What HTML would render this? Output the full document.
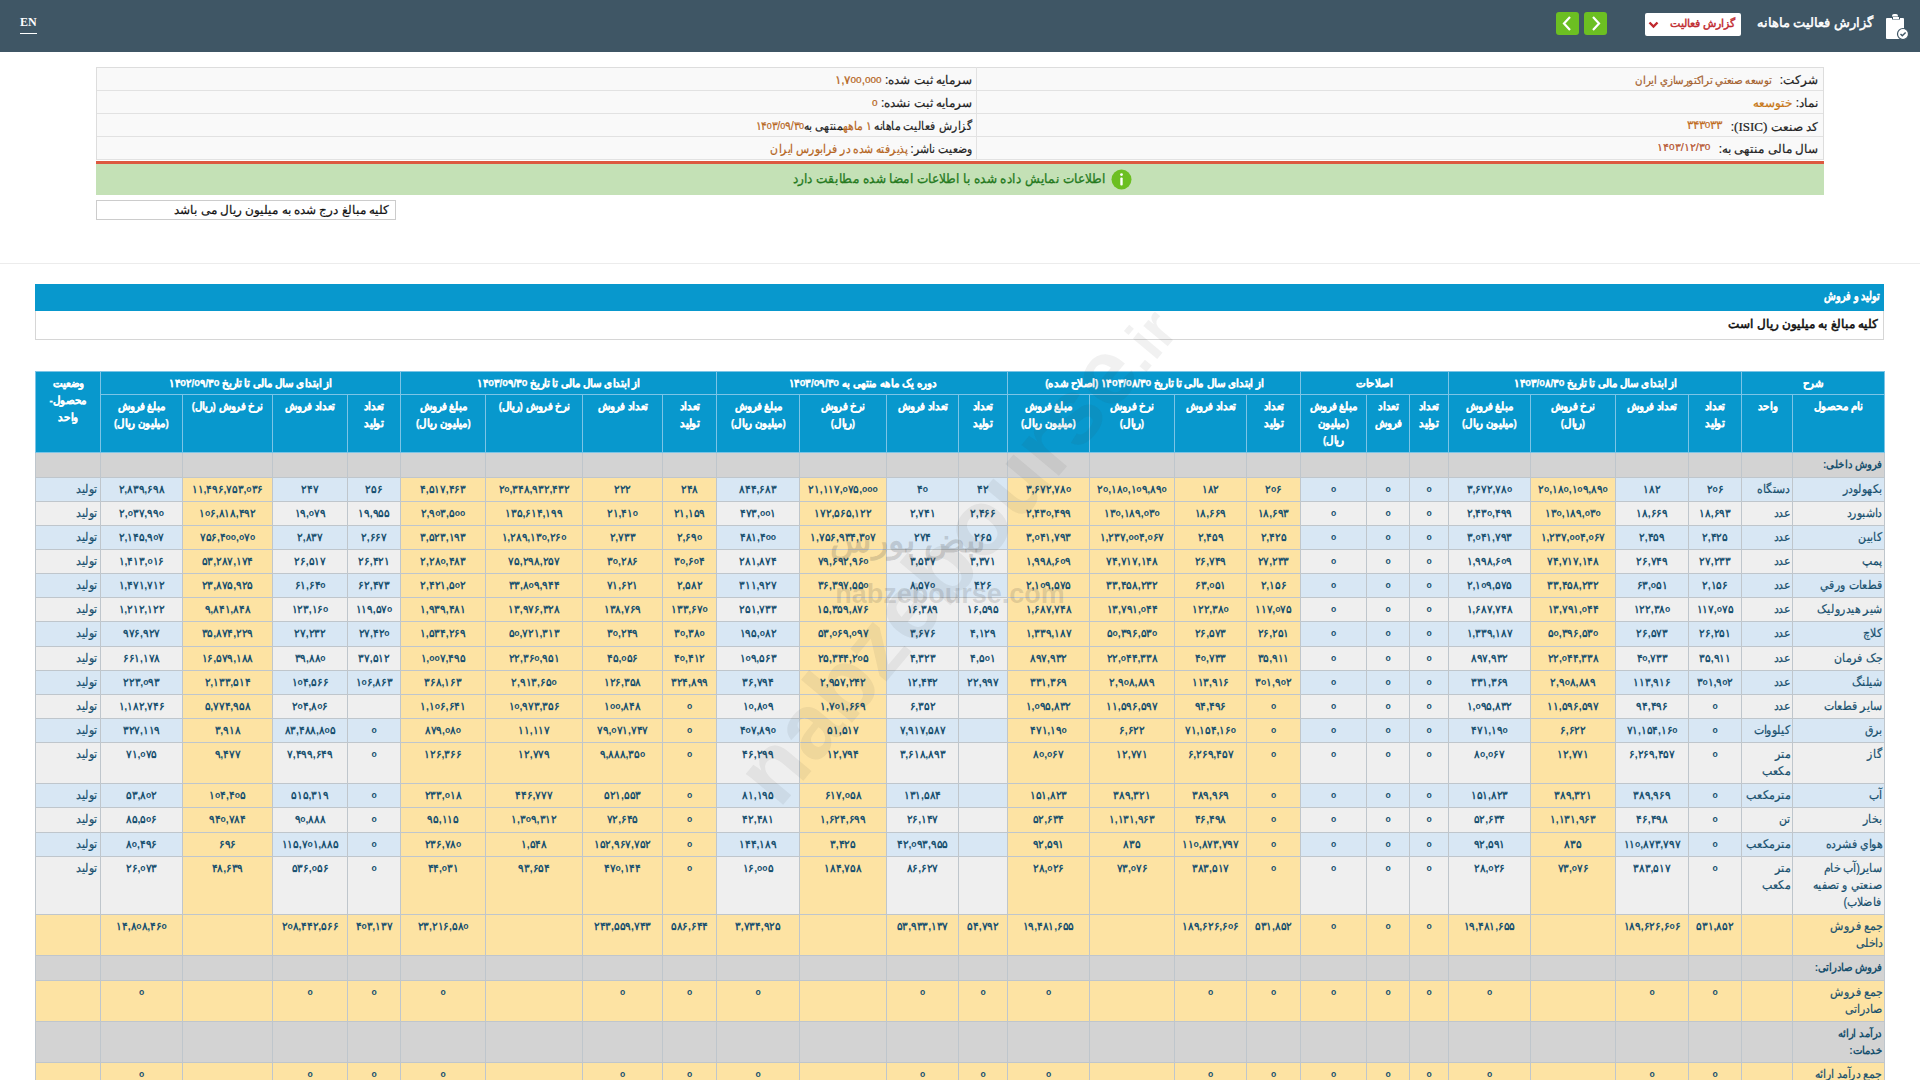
<!DOCTYPE html>
<html lang="fa" dir="rtl"><head><meta charset="utf-8"><title>گزارش فعالیت ماهانه</title>
<style>
*{box-sizing:border-box}
html,body{margin:0;padding:0;background:#fff;width:1920px;height:1080px;overflow:hidden;font-family:"Liberation Sans",sans-serif;}
.abs{position:absolute}
#top{left:0;top:0;width:1920px;height:52px;background:#3f5665}
#en{left:20px;top:15px;font-family:"Liberation Serif",serif;font-weight:bold;color:#fff;font-size:12px;border-bottom:1px solid #fff;line-height:14px;padding-bottom:4px;direction:ltr}
#ttl{right:47px;top:15px;color:#fff;font-size:13px;white-space:nowrap;-webkit-text-stroke:0.5px}
#sel{left:1645px;top:13px;width:96px;height:23px;background:#fff;border-radius:2px}
#sel span{position:absolute;right:6px;top:4px;color:#c0282d;font-size:11px;white-space:nowrap;-webkit-text-stroke:0.4px}
.gbtn{top:12px;width:23px;height:23px;background:#6cbf22;border-radius:3px}
#info{left:96px;top:67px;width:1728px;border:1px solid #ddd;border-bottom:0;background:#f9f9f9}
.irow{height:23px;border-bottom:1px solid #e2e2e2;position:relative;font-size:12px;white-space:nowrap}
.irow .r{position:absolute;right:5px;top:5px;color:#222;-webkit-text-stroke:0.2px}
.irow .l{position:absolute;right:851px;top:5px;color:#222;-webkit-text-stroke:0.2px}
.irow b{font-weight:normal;color:#b5651d}
s.z{text-decoration:none;font-family:'Liberation Sans',sans-serif;font-size:10px;position:relative;top:-1px}
.sx{display:inline-block;font-size:11px;transform:scaleX(.93);transform-origin:right;margin-right:4px}
.sy{transform:scaleX(.9);transform-origin:right}
#vsep{left:976px;top:67px;width:1px;height:93px;background:#e2e2e2}
#red{left:96px;top:161px;width:1728px;height:3px;background:#dd5840}
#green{left:96px;top:164px;width:1728px;height:31px;background:#c4e1b6}
#gtxt{right:718px;top:7px;color:#257a1e;font-size:13px;white-space:nowrap;-webkit-text-stroke:0.3px;transform:scaleX(.93);transform-origin:right}
#note{left:96px;top:200px;width:300px;height:20px;border:1px solid #ccc;font-size:12px;color:#111;white-space:nowrap}
#note span{position:absolute;right:6px;top:2px;-webkit-text-stroke:0.2px}
#hr{left:0;top:263px;width:1920px;height:1px;background:#ececec}
#tbar{left:35px;top:284px;width:1849px;height:27px;background:#0898cd}
#tbar span{position:absolute;right:4px;top:5px;color:#fff;font-weight:bold;font-size:12px;white-space:nowrap;transform:scaleX(.8);transform-origin:right;-webkit-text-stroke:0.2px}
#sub{left:35px;top:311px;width:1849px;height:29px;border:1px solid #d6d6d6;border-top:0;background:#fff}
#sub span{position:absolute;right:5px;top:6px;color:#111;font-size:12px;white-space:nowrap;-webkit-text-stroke:0.55px}
table#t{position:absolute;left:35px;top:371px;border-collapse:collapse;table-layout:fixed;width:1849px}
#t td,#t th{border:1px solid #bfc6cc;padding:0;font-size:11px;font-weight:bold;text-align:center;vertical-align:top;color:#17506e;white-space:nowrap;overflow:hidden}
#t th{background:#0898cd;color:#fff;font-weight:bold;border-color:#7cc4e6;font-size:10.5px;line-height:17px;padding-top:3px;white-space:nowrap;overflow:visible}
#t tr.o td{background:#d8e7f4}
#t tr.e td{background:#efefef}
#t tr.o td.y,#t tr.e td.y,#t tr.tot td{background:#fde3a3}
#t tr.cat td{background:#d3d3d3}
#t td{line-height:17px;padding-top:3px}
#t th span.h{display:inline-block;transform:scaleX(.93);margin:0 -12px;-webkit-text-stroke:0.25px}
#t td i{display:block;font-style:normal;margin:0 -12px;transform:scaleX(.95);direction:ltr}
#t td i s{text-decoration:none;font-size:9px;font-family:'Liberation Sans',sans-serif;position:relative;top:-1px}
#t td.nm{text-align:right;padding-right:2px;overflow:visible;font-size:12px;font-weight:normal;-webkit-text-stroke:0.2px}
#t td span.w{display:inline-block;transform:scaleX(.91);transform-origin:right;margin-left:-20px}
#t td.un{text-align:right;padding-right:2px;font-size:12px;font-weight:normal;-webkit-text-stroke:0.2px}
#t td.st{text-align:right;padding-right:3px;font-size:12px;font-weight:normal;-webkit-text-stroke:0.2px}
#t tr.cat td.nm{font-weight:bold;font-size:11px;-webkit-text-stroke:0}
#t tr.cat td.nm span{display:inline-block;transform:scaleX(.92);transform-origin:right}
</style></head><body>

<div id="top" class="abs">
<div id="en" class="abs">EN</div>
<svg class="abs" style="left:1884px;top:14px" width="26" height="26" viewBox="0 0 26 26">
<path d="M3 4 h5 v-2 a2 2 0 0 1 2 -2 h2 a2 2 0 0 1 2 2 v2 h5 a1 1 0 0 1 1 1 v19 a1 1 0 0 1 -1 1 h-16 a1 1 0 0 1 -1 -1 v-19 a1 1 0 0 1 1 -1z" fill="#fff"/>
<path d="M8 2.5 h8 v3 h-8z" fill="#3f5665"/><rect x="9" y="3" width="6" height="2" fill="#fff"/>
<circle cx="19" cy="20" r="5.5" fill="#fff" stroke="#3f5665" stroke-width="1.2"/>
<path d="M16.5 20 l1.8 1.8 l3.3 -3.3" stroke="#3f5665" stroke-width="1.4" fill="none"/>
</svg>
<div id="ttl" class="abs">گزارش فعالیت ماهانه</div>
<div id="sel" class="abs"><span>گزارش فعالیت</span>
<svg class="abs" style="left:3px;top:8px" width="11" height="8" viewBox="0 0 11 8"><path d="M1.5 1.5 L5.5 5.5 L9.5 1.5" stroke="#c0282d" stroke-width="2.4" fill="none"/></svg></div>
<div class="abs gbtn" style="left:1556px"><svg width="23" height="23" viewBox="0 0 23 23"><path d="M14 5 L8 11.5 L14 18" stroke="#fff" stroke-width="2.2" fill="none"/></svg></div>
<div class="abs gbtn" style="left:1584px"><svg width="23" height="23" viewBox="0 0 23 23"><path d="M9 5 L15 11.5 L9 18" stroke="#fff" stroke-width="2.2" fill="none"/></svg></div>
</div>

<div id="info" class="abs">
<div class="irow"><span class="r">شرکت: <b class="sx" style="color:#a4602c">توسعه صنعتي تراكتورسازي ايران</b></span><span class="l">سرمایه ثبت شده: <b>۱,۷<s class="z">o</s><s class="z">o</s>,<s class="z">o</s><s class="z">o</s><s class="z">o</s></b></span></div>
<div class="irow"><span class="r">نماد: <b style="color:#c77614">ختوسعه</b></span><span class="l">سرمایه ثبت نشده: <b><s class="z">o</s></b></span></div>
<div class="irow"><span class="r">کد صنعت <span style="font-family:'Liberation Serif',serif;font-size:13px">(ISIC)</span>: <b style="position:relative;top:-2px;margin-right:5px;color:#c06a1e">۳۴۳<s class="z">o</s>۳۳</b></span><span class="l sy">گزارش فعالیت ماهانه <b>۱ ماهه</b>منتهی به<b>۱۴<s class="z">o</s>۳/<s class="z">o</s>۹/۳<s class="z">o</s></b></span></div>
<div class="irow"><span class="r">سال مالی منتهی به: <b style="position:relative;top:-2px;margin-right:5px;color:#b4502a;font-size:11px">۱۴<s class="z">o</s>۳/۱۲/۳<s class="z">o</s></b></span><span class="l sy">وضعیت ناشر: <b>پذیرفته شده در فرابورس ایران</b></span></div>
</div>
<div id="vsep" class="abs"></div>
<div id="red" class="abs"></div>
<div id="green" class="abs">
<svg class="abs" style="left:1015px;top:5px" width="21" height="21" viewBox="0 0 21 21"><circle cx="10.5" cy="10.5" r="10" fill="#6cbf22"/><rect x="9.3" y="8.5" width="2.4" height="8" rx="1" fill="#fff"/><circle cx="10.5" cy="5.6" r="1.4" fill="#fff"/></svg>
<span id="gtxt" class="abs">اطلاعات نمایش داده شده با اطلاعات امضا شده مطابقت دارد</span>
</div>
<div id="note" class="abs"><span>کلیه مبالغ درج شده به میلیون ریال می باشد</span></div>
<div id="hr" class="abs"></div>
<div id="tbar" class="abs"><span>تولید و فروش</span></div>
<div id="sub" class="abs"><span>کلیه مبالغ به میلیون ریال است</span></div>

<table id="t"><colgroup>
<col style="width:92px">
<col style="width:51px">
<col style="width:53px">
<col style="width:73px">
<col style="width:85px">
<col style="width:82px">
<col style="width:39px">
<col style="width:43px">
<col style="width:66px">
<col style="width:54px">
<col style="width:72px">
<col style="width:85px">
<col style="width:82px">
<col style="width:49px">
<col style="width:72px">
<col style="width:87px">
<col style="width:83px">
<col style="width:54px">
<col style="width:80px">
<col style="width:97px">
<col style="width:85px">
<col style="width:53px">
<col style="width:75px">
<col style="width:90px">
<col style="width:82px">
<col style="width:65px">
</colgroup>
<tr style="height:23px">
<th colspan="2"><span class="h">شرح</span></th>
<th colspan="4"><span class="h">از ابتدای سال مالی تا تاریخ ۱۴<s class="z">o</s>۳/<s class="z">o</s>۸/۳<s class="z">o</s></span></th>
<th colspan="3"><span class="h">اصلاحات</span></th>
<th colspan="4"><span class="h">از ابتدای سال مالی تا تاریخ ۱۴<s class="z">o</s>۳/<s class="z">o</s>۸/۳<s class="z">o</s> (اصلاح شده)</span></th>
<th colspan="4"><span class="h">دوره یک ماهه منتهی به ۱۴<s class="z">o</s>۳/<s class="z">o</s>۹/۳<s class="z">o</s></span></th>
<th colspan="4"><span class="h">از ابتدای سال مالی تا تاریخ ۱۴<s class="z">o</s>۳/<s class="z">o</s>۹/۳<s class="z">o</s></span></th>
<th colspan="4"><span class="h">از ابتدای سال مالی تا تاریخ ۱۴<s class="z">o</s>۲/<s class="z">o</s>۹/۳<s class="z">o</s></span></th>
<th rowspan="2"><span class="h">وضعیت<br>محصول-<br>واحد</span></th>
</tr>
<tr style="height:58px">
<th><span class="h">نام محصول</span></th><th><span class="h">واحد</span></th>
<th><span class="h">تعداد<br>تولید</span></th><th><span class="h">تعداد فروش</span></th><th><span class="h">نرخ فروش<br>(ریال)</span></th><th><span class="h">مبلغ فروش<br>(میلیون ریال)</span></th>
<th><span class="h">تعداد<br>تولید</span></th><th><span class="h">تعداد<br>فروش</span></th><th><span class="h">مبلغ فروش<br>(میلیون<br>ریال)</span></th>
<th><span class="h">تعداد<br>تولید</span></th><th><span class="h">تعداد فروش</span></th><th><span class="h">نرخ فروش<br>(ریال)</span></th><th><span class="h">مبلغ فروش<br>(میلیون ریال)</span></th>
<th><span class="h">تعداد<br>تولید</span></th><th><span class="h">تعداد فروش</span></th><th><span class="h">نرخ فروش<br>(ریال)</span></th><th><span class="h">مبلغ فروش<br>(میلیون ریال)</span></th>
<th><span class="h">تعداد<br>تولید</span></th><th><span class="h">تعداد فروش</span></th><th><span class="h">نرخ فروش (ریال)</span></th><th><span class="h">مبلغ فروش<br>(میلیون ریال)</span></th>
<th><span class="h">تعداد<br>تولید</span></th><th><span class="h">تعداد فروش</span></th><th><span class="h">نرخ فروش (ریال)</span></th><th><span class="h">مبلغ فروش<br>(میلیون ریال)</span></th>
</tr>
<tr class="cat" style="height:25px"><td class="nm"><span>فروش داخلی:</span></td><td></td><td></td><td></td><td></td><td></td><td></td><td></td><td></td><td></td><td></td><td></td><td></td><td></td><td></td><td></td><td></td><td></td><td></td><td></td><td></td><td></td><td></td><td></td><td></td><td></td></tr>
<tr class="o" style="height:24px"><td class="nm"><span class="w">بکهولودر</span></td><td class="un"><span class="w">دستگاه</span></td><td><i>۲<s>o</s>۶</i></td><td><i>۱۸۲</i></td><td class="y"><i>۲<s>o</s>,۱۸<s>o</s>,۱<s>o</s>۹,۸۹<s>o</s></i></td><td><i>۳,۶۷۲,۷۸<s>o</s></i></td><td><i><s>o</s></i></td><td><i><s>o</s></i></td><td><i><s>o</s></i></td><td class="y"><i>۲<s>o</s>۶</i></td><td class="y"><i>۱۸۲</i></td><td class="y"><i>۲<s>o</s>,۱۸<s>o</s>,۱<s>o</s>۹,۸۹<s>o</s></i></td><td class="y"><i>۳,۶۷۲,۷۸<s>o</s></i></td><td><i>۴۲</i></td><td><i>۴<s>o</s></i></td><td class="y"><i>۲۱,۱۱۷,<s>o</s>۷۵,<s>o</s><s>o</s><s>o</s></i></td><td><i>۸۴۴,۶۸۳</i></td><td class="y"><i>۲۴۸</i></td><td class="y"><i>۲۲۲</i></td><td class="y"><i>۲<s>o</s>,۳۴۸,۹۳۲,۴۳۲</i></td><td class="y"><i>۴,۵۱۷,۴۶۳</i></td><td><i>۲۵۶</i></td><td><i>۲۴۷</i></td><td class="y"><i>۱۱,۴۹۶,۷۵۳,<s>o</s>۳۶</i></td><td><i>۲,۸۳۹,۶۹۸</i></td><td class="st"><span class="w">تولید</span></td></tr>
<tr class="e" style="height:24px"><td class="nm"><span class="w">داشبورد</span></td><td class="un"><span class="w">عدد</span></td><td><i>۱۸,۶۹۳</i></td><td><i>۱۸,۶۶۹</i></td><td class="y"><i>۱۳<s>o</s>,۱۸۹,<s>o</s>۳<s>o</s></i></td><td><i>۲,۴۳<s>o</s>,۴۹۹</i></td><td><i><s>o</s></i></td><td><i><s>o</s></i></td><td><i><s>o</s></i></td><td class="y"><i>۱۸,۶۹۳</i></td><td class="y"><i>۱۸,۶۶۹</i></td><td class="y"><i>۱۳<s>o</s>,۱۸۹,<s>o</s>۳<s>o</s></i></td><td class="y"><i>۲,۴۳<s>o</s>,۴۹۹</i></td><td><i>۲,۴۶۶</i></td><td><i>۲,۷۴۱</i></td><td class="y"><i>۱۷۲,۵۶۵,۱۲۲</i></td><td><i>۴۷۳,<s>o</s><s>o</s>۱</i></td><td class="y"><i>۲۱,۱۵۹</i></td><td class="y"><i>۲۱,۴۱<s>o</s></i></td><td class="y"><i>۱۳۵,۶۱۴,۱۹۹</i></td><td class="y"><i>۲,۹<s>o</s>۳,۵<s>o</s><s>o</s></i></td><td><i>۱۹,۹۵۵</i></td><td><i>۱۹,<s>o</s>۷۹</i></td><td class="y"><i>۱<s>o</s>۶,۸۱۸,۴۹۲</i></td><td><i>۲,<s>o</s>۳۷,۹۹<s>o</s></i></td><td class="st"><span class="w">تولید</span></td></tr>
<tr class="o" style="height:24px"><td class="nm"><span class="w">کابین</span></td><td class="un"><span class="w">عدد</span></td><td><i>۲,۴۲۵</i></td><td><i>۲,۴۵۹</i></td><td class="y"><i>۱,۲۳۷,<s>o</s><s>o</s>۴,<s>o</s>۶۷</i></td><td><i>۳,<s>o</s>۴۱,۷۹۳</i></td><td><i><s>o</s></i></td><td><i><s>o</s></i></td><td><i><s>o</s></i></td><td class="y"><i>۲,۴۲۵</i></td><td class="y"><i>۲,۴۵۹</i></td><td class="y"><i>۱,۲۳۷,<s>o</s><s>o</s>۴,<s>o</s>۶۷</i></td><td class="y"><i>۳,<s>o</s>۴۱,۷۹۳</i></td><td><i>۲۶۵</i></td><td><i>۲۷۴</i></td><td class="y"><i>۱,۷۵۶,۹۳۴,۳<s>o</s>۷</i></td><td><i>۴۸۱,۴<s>o</s><s>o</s></i></td><td class="y"><i>۲,۶۹<s>o</s></i></td><td class="y"><i>۲,۷۳۳</i></td><td class="y"><i>۱,۲۸۹,۱۳<s>o</s>,۲۶<s>o</s></i></td><td class="y"><i>۳,۵۲۳,۱۹۳</i></td><td><i>۲,۶۶۷</i></td><td><i>۲,۸۳۷</i></td><td class="y"><i>۷۵۶,۴<s>o</s><s>o</s>,<s>o</s>۷<s>o</s></i></td><td><i>۲,۱۴۵,۹<s>o</s>۷</i></td><td class="st"><span class="w">تولید</span></td></tr>
<tr class="e" style="height:24px"><td class="nm"><span class="w">پمپ</span></td><td class="un"><span class="w">عدد</span></td><td><i>۲۷,۲۳۳</i></td><td><i>۲۶,۷۴۹</i></td><td class="y"><i>۷۴,۷۱۷,۱۴۸</i></td><td><i>۱,۹۹۸,۶<s>o</s>۹</i></td><td><i><s>o</s></i></td><td><i><s>o</s></i></td><td><i><s>o</s></i></td><td class="y"><i>۲۷,۲۳۳</i></td><td class="y"><i>۲۶,۷۴۹</i></td><td class="y"><i>۷۴,۷۱۷,۱۴۸</i></td><td class="y"><i>۱,۹۹۸,۶<s>o</s>۹</i></td><td><i>۳,۳۷۱</i></td><td><i>۳,۵۳۷</i></td><td class="y"><i>۷۹,۶۹۲,۹۶<s>o</s></i></td><td><i>۲۸۱,۸۷۴</i></td><td class="y"><i>۳<s>o</s>,۶<s>o</s>۴</i></td><td class="y"><i>۳<s>o</s>,۲۸۶</i></td><td class="y"><i>۷۵,۲۹۸,۲۵۷</i></td><td class="y"><i>۲,۲۸<s>o</s>,۴۸۳</i></td><td><i>۲۶,۴۲۱</i></td><td><i>۲۶,۵۱۷</i></td><td class="y"><i>۵۳,۲۸۷,۱۷۴</i></td><td><i>۱,۴۱۳,<s>o</s>۱۶</i></td><td class="st"><span class="w">تولید</span></td></tr>
<tr class="o" style="height:24px"><td class="nm"><span class="w">قطعات ورقي</span></td><td class="un"><span class="w">عدد</span></td><td><i>۲,۱۵۶</i></td><td><i>۶۳,<s>o</s>۵۱</i></td><td class="y"><i>۳۳,۴۵۸,۲۳۲</i></td><td><i>۲,۱<s>o</s>۹,۵۷۵</i></td><td><i><s>o</s></i></td><td><i><s>o</s></i></td><td><i><s>o</s></i></td><td class="y"><i>۲,۱۵۶</i></td><td class="y"><i>۶۳,<s>o</s>۵۱</i></td><td class="y"><i>۳۳,۴۵۸,۲۳۲</i></td><td class="y"><i>۲,۱<s>o</s>۹,۵۷۵</i></td><td><i>۴۲۶</i></td><td><i>۸,۵۷<s>o</s></i></td><td class="y"><i>۳۶,۳۹۷,۵۵<s>o</s></i></td><td><i>۳۱۱,۹۲۷</i></td><td class="y"><i>۲,۵۸۲</i></td><td class="y"><i>۷۱,۶۲۱</i></td><td class="y"><i>۳۳,۸<s>o</s>۹,۹۴۴</i></td><td class="y"><i>۲,۴۲۱,۵<s>o</s>۲</i></td><td><i>۶۲,۴۷۳</i></td><td><i>۶۱,۶۴<s>o</s></i></td><td class="y"><i>۲۳,۸۷۵,۹۲۵</i></td><td><i>۱,۴۷۱,۷۱۲</i></td><td class="st"><span class="w">تولید</span></td></tr>
<tr class="e" style="height:24px"><td class="nm"><span class="w">شیر هیدرولیک</span></td><td class="un"><span class="w">عدد</span></td><td><i>۱۱۷,<s>o</s>۷۵</i></td><td><i>۱۲۲,۳۸<s>o</s></i></td><td class="y"><i>۱۳,۷۹۱,<s>o</s>۴۴</i></td><td><i>۱,۶۸۷,۷۴۸</i></td><td><i><s>o</s></i></td><td><i><s>o</s></i></td><td><i><s>o</s></i></td><td class="y"><i>۱۱۷,<s>o</s>۷۵</i></td><td class="y"><i>۱۲۲,۳۸<s>o</s></i></td><td class="y"><i>۱۳,۷۹۱,<s>o</s>۴۴</i></td><td class="y"><i>۱,۶۸۷,۷۴۸</i></td><td><i>۱۶,۵۹۵</i></td><td><i>۱۶,۳۸۹</i></td><td class="y"><i>۱۵,۳۵۹,۸۷۶</i></td><td><i>۲۵۱,۷۳۳</i></td><td class="y"><i>۱۳۳,۶۷<s>o</s></i></td><td class="y"><i>۱۳۸,۷۶۹</i></td><td class="y"><i>۱۳,۹۷۶,۳۲۸</i></td><td class="y"><i>۱,۹۳۹,۴۸۱</i></td><td><i>۱۱۹,۵۷<s>o</s></i></td><td><i>۱۲۳,۱۶<s>o</s></i></td><td class="y"><i>۹,۸۴۱,۸۴۸</i></td><td><i>۱,۲۱۲,۱۲۲</i></td><td class="st"><span class="w">تولید</span></td></tr>
<tr class="o" style="height:25px"><td class="nm"><span class="w">کلاچ</span></td><td class="un"><span class="w">عدد</span></td><td><i>۲۶,۲۵۱</i></td><td><i>۲۶,۵۷۳</i></td><td class="y"><i>۵<s>o</s>,۳۹۶,۵۳<s>o</s></i></td><td><i>۱,۳۳۹,۱۸۷</i></td><td><i><s>o</s></i></td><td><i><s>o</s></i></td><td><i><s>o</s></i></td><td class="y"><i>۲۶,۲۵۱</i></td><td class="y"><i>۲۶,۵۷۳</i></td><td class="y"><i>۵<s>o</s>,۳۹۶,۵۳<s>o</s></i></td><td class="y"><i>۱,۳۳۹,۱۸۷</i></td><td><i>۴,۱۲۹</i></td><td><i>۳,۶۷۶</i></td><td class="y"><i>۵۳,<s>o</s>۶۹,<s>o</s>۹۷</i></td><td><i>۱۹۵,<s>o</s>۸۲</i></td><td class="y"><i>۳<s>o</s>,۳۸<s>o</s></i></td><td class="y"><i>۳<s>o</s>,۲۴۹</i></td><td class="y"><i>۵<s>o</s>,۷۲۱,۳۱۳</i></td><td class="y"><i>۱,۵۳۴,۲۶۹</i></td><td><i>۲۷,۴۲<s>o</s></i></td><td><i>۲۷,۲۳۲</i></td><td class="y"><i>۳۵,۸۷۴,۲۲۹</i></td><td><i>۹۷۶,۹۲۷</i></td><td class="st"><span class="w">تولید</span></td></tr>
<tr class="e" style="height:24px"><td class="nm"><span class="w">جک فرمان</span></td><td class="un"><span class="w">عدد</span></td><td><i>۳۵,۹۱۱</i></td><td><i>۴<s>o</s>,۷۳۳</i></td><td class="y"><i>۲۲,<s>o</s>۴۴,۳۳۸</i></td><td><i>۸۹۷,۹۳۲</i></td><td><i><s>o</s></i></td><td><i><s>o</s></i></td><td><i><s>o</s></i></td><td class="y"><i>۳۵,۹۱۱</i></td><td class="y"><i>۴<s>o</s>,۷۳۳</i></td><td class="y"><i>۲۲,<s>o</s>۴۴,۳۳۸</i></td><td class="y"><i>۸۹۷,۹۳۲</i></td><td><i>۴,۵<s>o</s>۱</i></td><td><i>۴,۳۲۳</i></td><td class="y"><i>۲۵,۳۴۴,۲<s>o</s>۵</i></td><td><i>۱<s>o</s>۹,۵۶۳</i></td><td class="y"><i>۴<s>o</s>,۴۱۲</i></td><td class="y"><i>۴۵,<s>o</s>۵۶</i></td><td class="y"><i>۲۲,۳۶<s>o</s>,۹۵۱</i></td><td class="y"><i>۱,<s>o</s><s>o</s>۷,۴۹۵</i></td><td><i>۳۷,۵۱۲</i></td><td><i>۳۹,۸۸<s>o</s></i></td><td class="y"><i>۱۶,۵۷۹,۱۸۸</i></td><td><i>۶۶۱,۱۷۸</i></td><td class="st"><span class="w">تولید</span></td></tr>
<tr class="o" style="height:24px"><td class="nm"><span class="w">شیلنگ</span></td><td class="un"><span class="w">عدد</span></td><td><i>۳<s>o</s>۱,۹<s>o</s>۲</i></td><td><i>۱۱۳,۹۱۶</i></td><td class="y"><i>۲,۹<s>o</s>۸,۸۸۹</i></td><td><i>۳۳۱,۳۶۹</i></td><td><i><s>o</s></i></td><td><i><s>o</s></i></td><td><i><s>o</s></i></td><td class="y"><i>۳<s>o</s>۱,۹<s>o</s>۲</i></td><td class="y"><i>۱۱۳,۹۱۶</i></td><td class="y"><i>۲,۹<s>o</s>۸,۸۸۹</i></td><td class="y"><i>۳۳۱,۳۶۹</i></td><td><i>۲۲,۹۹۷</i></td><td><i>۱۲,۴۴۲</i></td><td class="y"><i>۲,۹۵۷,۲۴۲</i></td><td><i>۳۶,۷۹۴</i></td><td class="y"><i>۳۲۴,۸۹۹</i></td><td class="y"><i>۱۲۶,۳۵۸</i></td><td class="y"><i>۲,۹۱۳,۶۵<s>o</s></i></td><td class="y"><i>۳۶۸,۱۶۳</i></td><td><i>۱<s>o</s>۶,۸۶۳</i></td><td><i>۱<s>o</s>۴,۵۶۶</i></td><td class="y"><i>۲,۱۳۳,۵۱۴</i></td><td><i>۲۲۳,<s>o</s>۹۳</i></td><td class="st"><span class="w">تولید</span></td></tr>
<tr class="e" style="height:24px"><td class="nm"><span class="w">سایر قطعات</span></td><td class="un"><span class="w">عدد</span></td><td><i><s>o</s></i></td><td><i>۹۴,۴۹۶</i></td><td class="y"><i>۱۱,۵۹۶,۵۹۷</i></td><td><i>۱,<s>o</s>۹۵,۸۳۲</i></td><td><i><s>o</s></i></td><td><i><s>o</s></i></td><td><i><s>o</s></i></td><td class="y"><i><s>o</s></i></td><td class="y"><i>۹۴,۴۹۶</i></td><td class="y"><i>۱۱,۵۹۶,۵۹۷</i></td><td class="y"><i>۱,<s>o</s>۹۵,۸۳۲</i></td><td></td><td><i>۶,۳۵۲</i></td><td class="y"><i>۱,۷<s>o</s>۱,۶۶۹</i></td><td><i>۱<s>o</s>,۸<s>o</s>۹</i></td><td class="y"><i><s>o</s></i></td><td class="y"><i>۱<s>o</s><s>o</s>,۸۴۸</i></td><td class="y"><i>۱<s>o</s>,۹۷۳,۳۵۶</i></td><td class="y"><i>۱,۱<s>o</s>۶,۶۴۱</i></td><td></td><td><i>۲<s>o</s>۴,۸<s>o</s>۶</i></td><td class="y"><i>۵,۷۷۴,۹۵۸</i></td><td><i>۱,۱۸۲,۷۴۶</i></td><td class="st"><span class="w">تولید</span></td></tr>
<tr class="o" style="height:24px"><td class="nm"><span class="w">برق</span></td><td class="un"><span class="w">کیلووات</span></td><td><i><s>o</s></i></td><td><i>۷۱,۱۵۴,۱۶<s>o</s></i></td><td class="y"><i>۶,۶۲۲</i></td><td><i>۴۷۱,۱۹<s>o</s></i></td><td><i><s>o</s></i></td><td><i><s>o</s></i></td><td><i><s>o</s></i></td><td class="y"><i><s>o</s></i></td><td class="y"><i>۷۱,۱۵۴,۱۶<s>o</s></i></td><td class="y"><i>۶,۶۲۲</i></td><td class="y"><i>۴۷۱,۱۹<s>o</s></i></td><td></td><td><i>۷,۹۱۷,۵۸۷</i></td><td class="y"><i>۵۱,۵۱۷</i></td><td><i>۴<s>o</s>۷,۸۹<s>o</s></i></td><td class="y"><i><s>o</s></i></td><td class="y"><i>۷۹,<s>o</s>۷۱,۷۴۷</i></td><td class="y"><i>۱۱,۱۱۷</i></td><td class="y"><i>۸۷۹,<s>o</s>۸<s>o</s></i></td><td><i><s>o</s></i></td><td><i>۸۳,۴۸۸,۸<s>o</s>۵</i></td><td class="y"><i>۳,۹۱۸</i></td><td><i>۳۲۷,۱۱۹</i></td><td class="st"><span class="w">تولید</span></td></tr>
<tr class="e" style="height:41px"><td class="nm"><span class="w">گاز</span></td><td class="un"><span class="w">متر<br>مکعب</span></td><td><i><s>o</s></i></td><td><i>۶,۲۶۹,۴۵۷</i></td><td class="y"><i>۱۲,۷۷۱</i></td><td><i>۸<s>o</s>,<s>o</s>۶۷</i></td><td><i><s>o</s></i></td><td><i><s>o</s></i></td><td><i><s>o</s></i></td><td class="y"><i><s>o</s></i></td><td class="y"><i>۶,۲۶۹,۴۵۷</i></td><td class="y"><i>۱۲,۷۷۱</i></td><td class="y"><i>۸<s>o</s>,<s>o</s>۶۷</i></td><td></td><td><i>۳,۶۱۸,۸۹۳</i></td><td class="y"><i>۱۲,۷۹۴</i></td><td><i>۴۶,۲۹۹</i></td><td class="y"><i><s>o</s></i></td><td class="y"><i>۹,۸۸۸,۳۵<s>o</s></i></td><td class="y"><i>۱۲,۷۷۹</i></td><td class="y"><i>۱۲۶,۳۶۶</i></td><td><i><s>o</s></i></td><td><i>۷,۴۹۹,۶۴۹</i></td><td class="y"><i>۹,۴۷۷</i></td><td><i>۷۱,<s>o</s>۷۵</i></td><td class="st"><span class="w">تولید</span></td></tr>
<tr class="o" style="height:24px"><td class="nm"><span class="w">آب</span></td><td class="un"><span class="w">مترمکعب</span></td><td><i><s>o</s></i></td><td><i>۳۸۹,۹۶۹</i></td><td class="y"><i>۳۸۹,۳۲۱</i></td><td><i>۱۵۱,۸۲۳</i></td><td><i><s>o</s></i></td><td><i><s>o</s></i></td><td><i><s>o</s></i></td><td class="y"><i><s>o</s></i></td><td class="y"><i>۳۸۹,۹۶۹</i></td><td class="y"><i>۳۸۹,۳۲۱</i></td><td class="y"><i>۱۵۱,۸۲۳</i></td><td></td><td><i>۱۳۱,۵۸۴</i></td><td class="y"><i>۶۱۷,<s>o</s>۵۸</i></td><td><i>۸۱,۱۹۵</i></td><td class="y"><i><s>o</s></i></td><td class="y"><i>۵۲۱,۵۵۳</i></td><td class="y"><i>۴۴۶,۷۷۷</i></td><td class="y"><i>۲۳۳,<s>o</s>۱۸</i></td><td><i><s>o</s></i></td><td><i>۵۱۵,۳۱۹</i></td><td class="y"><i>۱<s>o</s>۴,۴<s>o</s>۵</i></td><td><i>۵۳,۸<s>o</s>۲</i></td><td class="st"><span class="w">تولید</span></td></tr>
<tr class="e" style="height:25px"><td class="nm"><span class="w">بخار</span></td><td class="un"><span class="w">تن</span></td><td><i><s>o</s></i></td><td><i>۴۶,۴۹۸</i></td><td class="y"><i>۱,۱۳۱,۹۶۳</i></td><td><i>۵۲,۶۳۴</i></td><td><i><s>o</s></i></td><td><i><s>o</s></i></td><td><i><s>o</s></i></td><td class="y"><i><s>o</s></i></td><td class="y"><i>۴۶,۴۹۸</i></td><td class="y"><i>۱,۱۳۱,۹۶۳</i></td><td class="y"><i>۵۲,۶۳۴</i></td><td></td><td><i>۲۶,۱۴۷</i></td><td class="y"><i>۱,۶۲۴,۶۹۹</i></td><td><i>۴۲,۴۸۱</i></td><td class="y"><i><s>o</s></i></td><td class="y"><i>۷۲,۶۴۵</i></td><td class="y"><i>۱,۳<s>o</s>۹,۳۱۲</i></td><td class="y"><i>۹۵,۱۱۵</i></td><td><i><s>o</s></i></td><td><i>۹<s>o</s>,۸۸۸</i></td><td class="y"><i>۹۴<s>o</s>,۷۸۴</i></td><td><i>۸۵,۵<s>o</s>۶</i></td><td class="st"><span class="w">تولید</span></td></tr>
<tr class="o" style="height:24px"><td class="nm"><span class="w">هواي فشرده</span></td><td class="un"><span class="w">مترمکعب</span></td><td><i><s>o</s></i></td><td><i>۱۱<s>o</s>,۸۷۳,۷۹۷</i></td><td class="y"><i>۸۳۵</i></td><td><i>۹۲,۵۹۱</i></td><td><i><s>o</s></i></td><td><i><s>o</s></i></td><td><i><s>o</s></i></td><td class="y"><i><s>o</s></i></td><td class="y"><i>۱۱<s>o</s>,۸۷۳,۷۹۷</i></td><td class="y"><i>۸۳۵</i></td><td class="y"><i>۹۲,۵۹۱</i></td><td></td><td><i>۴۲,<s>o</s>۹۳,۹۵۵</i></td><td class="y"><i>۳,۴۲۵</i></td><td><i>۱۴۴,۱۸۹</i></td><td class="y"><i><s>o</s></i></td><td class="y"><i>۱۵۲,۹۶۷,۷۵۲</i></td><td class="y"><i>۱,۵۴۸</i></td><td class="y"><i>۲۳۶,۷۸<s>o</s></i></td><td><i><s>o</s></i></td><td><i>۱۱۵,۷<s>o</s>۱,۸۸۵</i></td><td class="y"><i>۶۹۶</i></td><td><i>۸<s>o</s>,۴۹۶</i></td><td class="st"><span class="w">تولید</span></td></tr>
<tr class="e" style="height:58px"><td class="nm"><span class="w">سایر(آب خام<br>صنعتي و تصفیه<br>فاضلاب)</span></td><td class="un"><span class="w">متر<br>مکعب</span></td><td><i><s>o</s></i></td><td><i>۳۸۳,۵۱۷</i></td><td class="y"><i>۷۳,<s>o</s>۷۶</i></td><td><i>۲۸,<s>o</s>۲۶</i></td><td><i><s>o</s></i></td><td><i><s>o</s></i></td><td><i><s>o</s></i></td><td class="y"><i><s>o</s></i></td><td class="y"><i>۳۸۳,۵۱۷</i></td><td class="y"><i>۷۳,<s>o</s>۷۶</i></td><td class="y"><i>۲۸,<s>o</s>۲۶</i></td><td></td><td><i>۸۶,۶۲۷</i></td><td class="y"><i>۱۸۴,۷۵۸</i></td><td><i>۱۶,<s>o</s><s>o</s>۵</i></td><td class="y"><i><s>o</s></i></td><td class="y"><i>۴۷<s>o</s>,۱۴۴</i></td><td class="y"><i>۹۳,۶۵۴</i></td><td class="y"><i>۴۴,<s>o</s>۳۱</i></td><td><i><s>o</s></i></td><td><i>۵۳۶,<s>o</s>۵۶</i></td><td class="y"><i>۴۸,۶۳۹</i></td><td><i>۲۶,<s>o</s>۷۳</i></td><td class="st"><span class="w">تولید</span></td></tr>
<tr class="tot" style="height:41px"><td class="nm"><span class="w">جمع فروش<br>داخلی</span></td><td></td><td><i>۵۳۱,۸۵۲</i></td><td><i>۱۸۹,۶۲۶,۶<s>o</s>۶</i></td><td></td><td><i>۱۹,۴۸۱,۶۵۵</i></td><td><i><s>o</s></i></td><td><i><s>o</s></i></td><td><i><s>o</s></i></td><td><i>۵۳۱,۸۵۲</i></td><td><i>۱۸۹,۶۲۶,۶<s>o</s>۶</i></td><td></td><td><i>۱۹,۴۸۱,۶۵۵</i></td><td><i>۵۴,۷۹۲</i></td><td><i>۵۳,۹۳۳,۱۳۷</i></td><td></td><td><i>۳,۷۳۴,۹۲۵</i></td><td><i>۵۸۶,۶۴۴</i></td><td><i>۲۴۳,۵۵۹,۷۴۳</i></td><td></td><td><i>۲۳,۲۱۶,۵۸<s>o</s></i></td><td><i>۴<s>o</s>۳,۱۳۷</i></td><td><i>۲<s>o</s>۸,۴۴۲,۵۶۶</i></td><td></td><td><i>۱۴,۸<s>o</s>۸,۴۶<s>o</s></i></td><td></td></tr>
<tr class="cat" style="height:25px"><td class="nm"><span>فروش صادراتی:</span></td><td></td><td></td><td></td><td></td><td></td><td></td><td></td><td></td><td></td><td></td><td></td><td></td><td></td><td></td><td></td><td></td><td></td><td></td><td></td><td></td><td></td><td></td><td></td><td></td><td></td></tr>
<tr class="tot" style="height:41px"><td class="nm"><span class="w">جمع فروش<br>صادراتی</span></td><td></td><td><i><s>o</s></i></td><td><i><s>o</s></i></td><td></td><td><i><s>o</s></i></td><td><i><s>o</s></i></td><td><i><s>o</s></i></td><td><i><s>o</s></i></td><td><i><s>o</s></i></td><td><i><s>o</s></i></td><td></td><td><i><s>o</s></i></td><td><i><s>o</s></i></td><td><i><s>o</s></i></td><td></td><td><i><s>o</s></i></td><td><i><s>o</s></i></td><td><i><s>o</s></i></td><td></td><td><i><s>o</s></i></td><td><i><s>o</s></i></td><td><i><s>o</s></i></td><td></td><td><i><s>o</s></i></td><td></td></tr>
<tr class="cat" style="height:41px"><td class="nm"><span>درآمد ارائه<br>خدمات:</span></td><td></td><td></td><td></td><td></td><td></td><td></td><td></td><td></td><td></td><td></td><td></td><td></td><td></td><td></td><td></td><td></td><td></td><td></td><td></td><td></td><td></td><td></td><td></td><td></td><td></td></tr>
<tr class="tot" style="height:41px"><td class="nm"><span class="w">جمع درآمد ارائه<br>خدمات</span></td><td></td><td><i><s>o</s></i></td><td><i><s>o</s></i></td><td></td><td><i><s>o</s></i></td><td><i><s>o</s></i></td><td><i><s>o</s></i></td><td><i><s>o</s></i></td><td><i><s>o</s></i></td><td><i><s>o</s></i></td><td></td><td><i><s>o</s></i></td><td><i><s>o</s></i></td><td><i><s>o</s></i></td><td></td><td><i><s>o</s></i></td><td><i><s>o</s></i></td><td><i><s>o</s></i></td><td></td><td><i><s>o</s></i></td><td><i><s>o</s></i></td><td><i><s>o</s></i></td><td></td><td><i><s>o</s></i></td><td></td></tr>
</table>
<div class="abs" style="left:0;top:0;width:1920px;height:1080px;pointer-events:none;overflow:hidden">
<div class="abs" style="left:605px;top:495px;width:700px;height:110px;transform:rotate(-50deg);transform-origin:center;font-family:'Liberation Sans',sans-serif;font-weight:bold;font-size:92px;line-height:110px;color:rgba(60,60,60,0.07);direction:ltr;text-align:center;white-space:nowrap">nabzebourse<span style="font-size:60px">.ir</span></div>
<div class="abs" style="left:800px;top:520px;width:215px;text-align:center;font-size:34px;font-weight:bold;color:rgba(70,70,70,0.2);white-space:nowrap;line-height:40px">نبض بورس</div>
<div class="abs" style="left:830px;top:578px;width:240px;text-align:center;font-family:'Liberation Sans',sans-serif;font-size:27px;font-weight:bold;color:rgba(70,70,70,0.17);direction:ltr;white-space:nowrap;line-height:32px">nabzebourse.com</div>
</div>
</body></html>
